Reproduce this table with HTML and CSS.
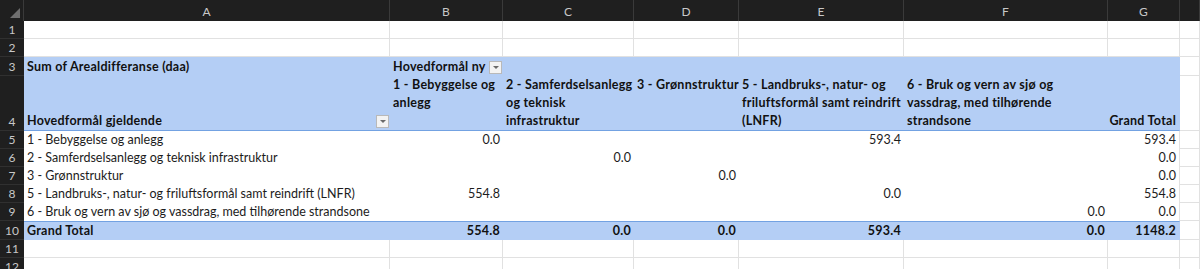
FILE: index.html
```html
<!DOCTYPE html>
<html lang="no">
<head>
  <meta charset="UTF-8" />
  <title>Arealdifferanse - pivot</title>
  <link rel="stylesheet" href="styles.css">
</head>
<body>
  <div class="sheet">
    <div class="row head">
      <div class="corner"><span class="tri"></span></div>
      <div>A</div><div>B</div><div>C</div><div>D</div><div>E</div><div>F</div><div>G</div><div></div>
    </div>

    <div class="row grid">
      <div class="num">1</div>
      <div></div><div></div><div></div><div></div><div></div><div></div><div></div><div></div>
    </div>
    <div class="row grid">
      <div class="num">2</div>
      <div></div><div></div><div></div><div></div><div></div><div></div><div></div><div></div>
    </div>

    <!-- pivot header -->
    <div class="row pv blue r3">
      <div class="num">3</div>
      <div class="c b">Sum of Arealdifferanse (daa)</div>
      <div class="c b split">Hovedformål ny <span class="filter"></span></div>
      <div class="c"></div><div class="c"></div><div class="c"></div><div class="c"></div><div class="c g"></div>
      <div class="x"></div>
    </div>
    <div class="row pv blue r4">
      <div class="num">4</div>
      <div class="c b split bottom">Hovedformål gjeldende <span class="filter"></span></div>
      <div class="c b top">1 - Bebyggelse og<br>anlegg</div>
      <div class="c b top tight">2 - Samferdselsanlegg<br>og teknisk<br>infrastruktur</div>
      <div class="c b top">3 - Grønnstruktur</div>
      <div class="c b top">5 - Landbruks-, natur- og<br>friluftsformål samt reindrift<br>(LNFR)</div>
      <div class="c b top">6 - Bruk og vern av sjø og<br>vassdrag, med tilhørende<br>strandsone</div>
      <div class="c b n bottom g">Grand Total</div>
      <div class="x"></div>
    </div>

    <!-- pivot body -->
    <div class="row pv">
      <div class="num">5</div>
      <div class="c">1 - Bebyggelse og anlegg</div>
      <div class="c n">0.0</div><div class="c"></div><div class="c"></div>
      <div class="c n">593.4</div><div class="c"></div>
      <div class="c n g">593.4</div>
      <div class="x"></div>
    </div>
    <div class="row pv">
      <div class="num">6</div>
      <div class="c">2 - Samferdselsanlegg og teknisk infrastruktur</div>
      <div class="c"></div><div class="c n">0.0</div><div class="c"></div>
      <div class="c"></div><div class="c"></div>
      <div class="c n g">0.0</div>
      <div class="x"></div>
    </div>
    <div class="row pv">
      <div class="num">7</div>
      <div class="c">3 - Grønnstruktur</div>
      <div class="c"></div><div class="c"></div><div class="c n">0.0</div>
      <div class="c"></div><div class="c"></div>
      <div class="c n g">0.0</div>
      <div class="x"></div>
    </div>
    <div class="row pv">
      <div class="num">8</div>
      <div class="c">5 - Landbruks-, natur- og friluftsformål samt reindrift (LNFR)</div>
      <div class="c n">554.8</div><div class="c"></div><div class="c"></div>
      <div class="c n">0.0</div><div class="c"></div>
      <div class="c n g">554.8</div>
      <div class="x"></div>
    </div>
    <div class="row pv">
      <div class="num">9</div>
      <div class="c">6 - Bruk og vern av sjø og vassdrag, med tilhørende strandsone</div>
      <div class="c"></div><div class="c"></div><div class="c"></div>
      <div class="c"></div><div class="c n">0.0</div>
      <div class="c n g">0.0</div>
      <div class="x"></div>
    </div>
    <div class="row pv blue total">
      <div class="num">10</div>
      <div class="c b">Grand Total</div>
      <div class="c b n">554.8</div>
      <div class="c b n">0.0</div>
      <div class="c b n">0.0</div>
      <div class="c b n">593.4</div>
      <div class="c b n">0.0</div>
      <div class="c b n g">1148.2</div>
      <div class="x"></div>
    </div>

    <div class="row grid">
      <div class="num">11</div>
      <div></div><div></div><div></div><div></div><div></div><div></div><div></div><div></div>
    </div>
    <div class="row grid">
      <div class="num">12</div>
      <div></div><div></div><div></div><div></div><div></div><div></div><div></div><div></div>
    </div>
  </div>
</body>
</html>
```

FILE: styles.css
```css
:root {
  --line: #e1e1e1;
  --pivot: #b4cef5;
  --pivot-line: #73a2e2;
  --dark: #1f1f1f;
}
body {
  margin: 0;
  background: #fff;
  font-family: Lato, "Open Sans", sans-serif;
  font-size: 12.5px;
  color: #1c1c1c;
  overflow: hidden;
}
.sheet { width: 1200px; }

.row {
  display: grid;
  grid-template-columns: 24px 366px 113px 131px 105px 165px 204px 72px 1fr;
  height: 18px;
  line-height: 18px;
}
.row > div { box-sizing: border-box; min-width: 0; }

/* column letters */
.head {
  height: 21px;
  background: var(--dark);
  color: #c8c8c8;
  font-size: 12px;
}
.head > div {
  display: flex;
  align-items: center;
  justify-content: center;
  padding-top: 2px;
  border-right: 1px solid #3a3a3a;
}
.corner { position: relative; }
.corner .tri {
  position: absolute;
  right: 3px;
  bottom: 3px;
  width: 0; height: 0;
  border-left: 10px solid transparent;
  border-bottom: 10px solid #6f6f6f;
}

/* row numbers */
.num {
  background: var(--dark);
  color: #c8c8c8;
  font-size: 12px;
  display: flex;
  align-items: flex-end;
  justify-content: center;
  border-bottom: 1px solid #303030;
  line-height: 17px;
}

/* plain sheet rows */
.grid > div:not(.num) {
  border-right: 1px solid var(--line);
  border-bottom: 1px solid var(--line);
}

/* pivot rows */
.pv .c {
  padding: 0 3px;
  white-space: nowrap;
  overflow: visible;
}
.pv .g { border-right: 1px solid var(--line); }
.pv .x {
  border-right: 1px solid var(--line);
  border-bottom: 1px solid var(--line);
}
.blue .c { background: var(--pivot); }
.blue .g { border-right-color: transparent; }

.b { font-weight: 700; color: #111; letter-spacing: 0.25px; }
.n { text-align: right; }

.r3 { height: 19px; }
.r3 .c { display: flex; align-items: flex-end; }
.r4 { height: 55px; }
.r4 .c { border-bottom: 1px solid var(--pivot-line); }
.top { align-self: stretch; }
.tight { padding-left: 0; }
.r4 .bottom {
  display: flex;
  align-items: flex-end;
  justify-content: flex-end;
}
.split { display: flex; justify-content: space-between; }
.r4 .split { justify-content: space-between; }
.total { height: 19px; }
.total .c { border-top: 1px solid var(--pivot-line); }

/* pivot filter dropdown */
.filter {
  flex: none;
  position: relative;
  width: 11px;
  height: 11px;
  margin: 0 -2px 2px 0;
  background: #f3f3f3;
  border: 1px solid #b9b9b9;
  align-self: flex-end;
}
.filter::after {
  content: "";
  position: absolute;
  left: 3px;
  top: 4px;
  border-left: 3px solid transparent;
  border-right: 3px solid transparent;
  border-top: 3px solid #6a6a6a;
}
```
